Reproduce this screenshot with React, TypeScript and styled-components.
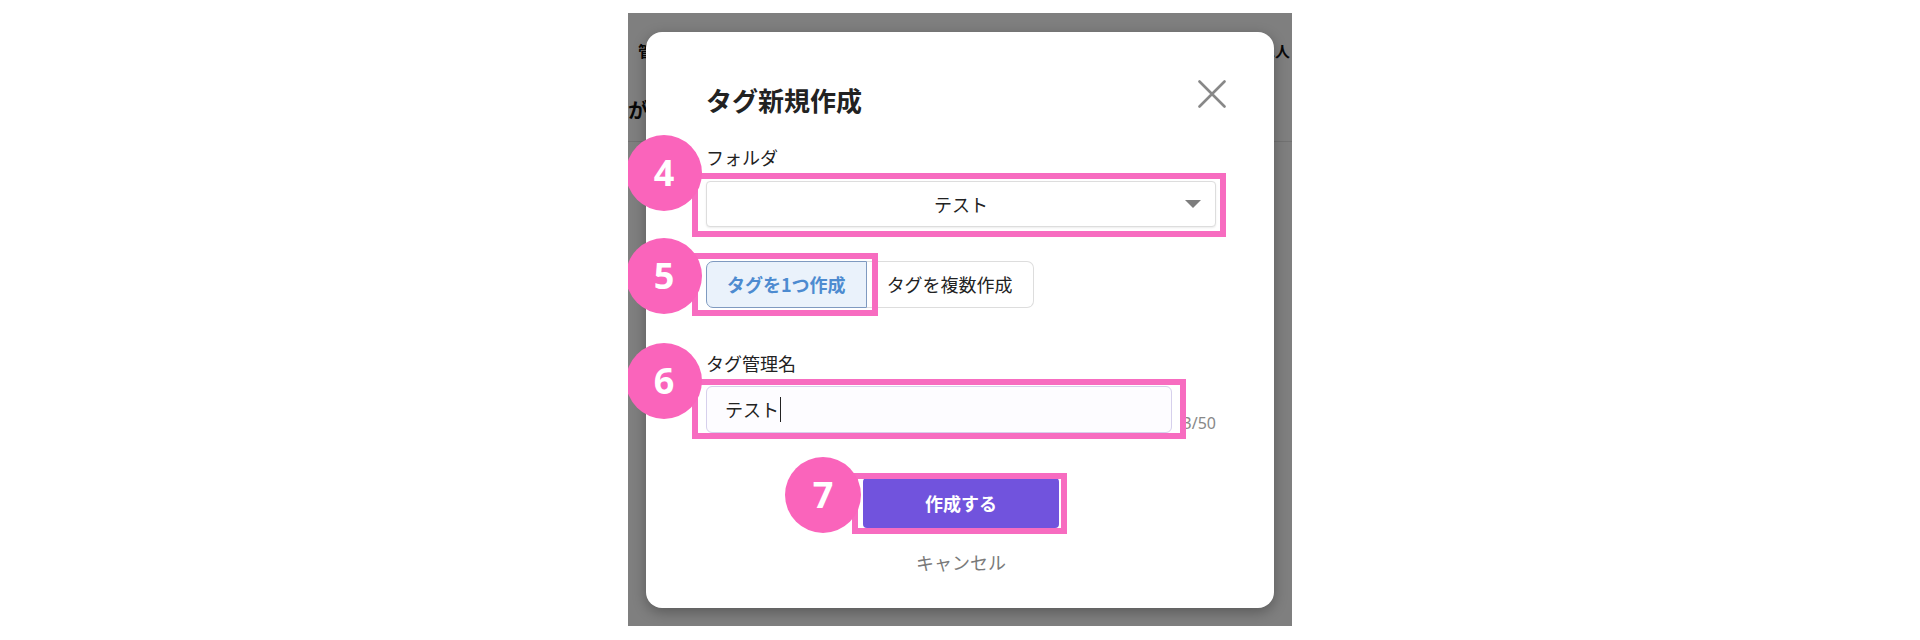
import React from "react";
import styled, { createGlobalStyle } from "styled-components";

const GlobalStyle = createGlobalStyle`
  html, body { margin: 0; padding: 0; background: #ffffff; }
  body { font-family: "Noto Sans CJK JP", "Noto Sans", sans-serif; color: #222; }
  * { box-sizing: border-box; }
`;

const PINK = "#f76cc0";

const Page = styled.div`
  width: 100%;
  height: 640px;
  display: flex;
  justify-content: center;
  padding-top: 13px;
`;

const Screen = styled.div`
  position: relative;
  width: 664px;
  height: 613px;
  overflow: hidden;
  background: #ffffff;
`;

const BehindPage = styled.div`
  display: flex;
  flex-direction: column;
`;

const TopBar = styled.div`
  height: 74px;
  display: flex;
  justify-content: space-between;
  align-items: center;
  padding: 0 2px 0 10px;
  font-size: 15px;
  font-weight: 700;
  color: #111;
  white-space: nowrap;
`;

const HeadingRow = styled.div`
  height: 55px;
  padding-top: 11px;
  border-bottom: 1px solid #e4e4e4;
  overflow: hidden;
`;

const Heading = styled.h2`
  margin: 0;
  font-size: 20px;
  line-height: 24px;
  font-weight: 700;
  color: #111;
  white-space: nowrap;
`;

const Backdrop = styled.div`
  position: absolute;
  inset: 0;
  background: rgba(0, 0, 0, 0.5);
  display: flex;
  align-items: center;
  justify-content: center;
`;

const Modal = styled.div`
  width: 628px;
  height: 576px;
  background: #ffffff;
  border-radius: 16px;
  box-shadow: 0 4px 14px rgba(0, 0, 0, 0.3);
  padding: 51px 48px 0 60px;
  display: flex;
  flex-direction: column;
`;

const Header = styled.div`
  display: flex;
  justify-content: space-between;
  align-items: flex-start;
`;

const Title = styled.h1`
  margin: 0;
  font-size: 26px;
  line-height: 34px;
  font-weight: 700;
  color: #222;
`;

const CloseButton = styled.button`
  margin-top: -3px;
  width: 28px;
  height: 28px;
  padding: 0;
  border: none;
  background: transparent;
  display: flex;
`;

const Body = styled.div`
  width: 510px;
  display: flex;
  flex-direction: column;
`;

const Field = styled.div<{ $mt: number }>`
  margin-top: ${(p) => p.$mt}px;
  display: flex;
  flex-direction: column;
`;

const Label = styled.div<{ $mb: number }>`
  font-size: 18px;
  line-height: 24px;
  color: #222;
  margin-bottom: ${(p) => p.$mb}px;
`;

const Annotated = styled.div<{ $inline?: boolean }>`
  position: relative;
  display: ${(p) => (p.$inline ? "inline-flex" : "flex")};
`;

const Frame = styled.span<{ $t: number; $r: number; $b: number; $l: number }>`
  position: absolute;
  top: ${(p) => p.$t}px;
  right: ${(p) => p.$r}px;
  bottom: ${(p) => p.$b}px;
  left: ${(p) => p.$l}px;
  border: 6px solid ${PINK};
  pointer-events: none;
`;

const Badge = styled.span<{ $x: number; $y: number }>`
  position: absolute;
  left: ${(p) => p.$x}px;
  top: ${(p) => p.$y}px;
  width: 76px;
  height: 76px;
  border-radius: 50%;
  background: #fa64bb;
  color: #ffffff;
  font-family: "Noto Sans", "Open Sans", sans-serif;
  font-size: 36px;
  font-weight: 700;
  display: flex;
  align-items: center;
  justify-content: center;
  line-height: 1;
`;

const SelectBox = styled.div`
  width: 510px;
  height: 46px;
  border: 1px solid #dddddd;
  border-radius: 4px;
  box-shadow: 0 1px 2px rgba(0, 0, 0, 0.08);
  background: #fff;
  display: grid;
  grid-template-columns: 1fr auto 1fr;
  align-items: center;
  font-size: 18px;
  color: #222;
`;

const SelectValue = styled.span`
  grid-column: 2;
`;

const Caret = styled.span`
  grid-column: 3;
  justify-self: end;
  margin-right: 14px;
  width: 0;
  height: 0;
  border-left: 8px solid transparent;
  border-right: 8px solid transparent;
  border-top: 8px solid #7d7d7d;
`;

const ToggleGroup = styled.div`
  margin-top: 34px;
  display: flex;
`;

const ToggleButton = styled.button<{ $active?: boolean; $side: "left" | "right" }>`
  height: 47px;
  padding: 0 20px;
  font-family: "Noto Sans CJK JP", sans-serif;
  font-size: 18px;
  font-weight: ${(p) => (p.$active ? 700 : 400)};
  color: ${(p) => (p.$active ? "#4d8bd0" : "#222")};
  background: ${(p) => (p.$active ? "#eaf2fb" : "#ffffff")};
  border: 1px solid ${(p) => (p.$active ? "#7f9ac0" : "#dddddd")};
  border-left-width: ${(p) => (p.$side === "right" ? 0 : 1)}px;
  border-radius: ${(p) => (p.$side === "left" ? "7px 0 0 7px" : "0 7px 7px 0")};
`;

const InputRow = styled.div`
  display: flex;
  align-items: flex-end;
`;

const InputBox = styled.div`
  width: 466px;
  height: 47px;
  border: 1px solid #d6d0ec;
  border-radius: 6px;
  background: #fdfcff;
  display: flex;
  align-items: center;
  padding-left: 18px;
  font-size: 18px;
  color: #222;
`;

const TextCaret = styled.span`
  width: 1px;
  height: 25px;
  margin-left: 1px;
  background: #222;
`;

const Counter = styled.span`
  margin-left: auto;
  font-family: "Noto Sans", sans-serif;
  font-size: 16px;
  line-height: 20px;
  color: #888;
`;

const Footer = styled.div`
  margin-top: 45px;
  display: flex;
  flex-direction: column;
  align-items: center;
`;

const PrimaryButton = styled.button`
  width: 196px;
  height: 50px;
  border: none;
  border-radius: 4px;
  background: #7153dd;
  color: #ffffff;
  font-family: "Noto Sans CJK JP", sans-serif;
  font-size: 18px;
  font-weight: 700;
`;

const CancelLink = styled.div`
  margin-top: 22px;
  font-size: 18px;
  line-height: 24px;
  color: #7a7a7a;
`;

export default function App() {
  return (
    <>
      <GlobalStyle />
      <Page>
        <Screen>
          <BehindPage>
            <TopBar>
              <span>管理画面</span>
              <span>ユーザー 1人</span>
            </TopBar>
            <HeadingRow>
              <Heading>がありません</Heading>
            </HeadingRow>
          </BehindPage>
          <Backdrop>
            <Modal>
              <Header>
                <Title>タグ新規作成</Title>
                <CloseButton aria-label="閉じる">
                  <svg width="28" height="28" viewBox="0 0 28 28">
                    <path d="M1.5 1.5 L26.5 26.5 M26.5 1.5 L1.5 26.5" stroke="#888" strokeWidth="2.6" strokeLinecap="round" />
                  </svg>
                </CloseButton>
              </Header>
              <Body>
                <Field $mt={28}>
                  <Label $mb={12}>フォルダ</Label>
                  <Annotated>
                    <SelectBox>
                      <SelectValue>テスト</SelectValue>
                      <Caret />
                    </SelectBox>
                    <Frame $t={-8} $r={-10} $b={-10} $l={-14} />
                    <Badge $x={-80} $y={-46}>4</Badge>
                  </Annotated>
                </Field>
                <ToggleGroup>
                  <Annotated $inline>
                    <ToggleButton $active $side="left">タグを1つ作成</ToggleButton>
                    <Frame $t={-8} $r={-11} $b={-8} $l={-14} />
                    <Badge $x={-80} $y={-23}>5</Badge>
                  </Annotated>
                  <ToggleButton $side="right">タグを複数作成</ToggleButton>
                </ToggleGroup>
                <Field $mt={43}>
                  <Label $mb={11}>タグ管理名</Label>
                  <InputRow>
                    <Annotated>
                      <InputBox>
                        <span>テスト</span>
                        <TextCaret />
                      </InputBox>
                      <Frame $t={-7} $r={-14} $b={-6} $l={-14} />
                      <Badge $x={-80} $y={-43}>6</Badge>
                    </Annotated>
                    <Counter>3/50</Counter>
                  </InputRow>
                </Field>
                <Footer>
                  <Annotated>
                    <PrimaryButton>作成する</PrimaryButton>
                    <Frame $t={-5} $r={-8} $b={-6} $l={-11} />
                    <Badge $x={-78} $y={-21}>7</Badge>
                  </Annotated>
                  <CancelLink>キャンセル</CancelLink>
                </Footer>
              </Body>
            </Modal>
          </Backdrop>
        </Screen>
      </Page>
    </>
  );
}
